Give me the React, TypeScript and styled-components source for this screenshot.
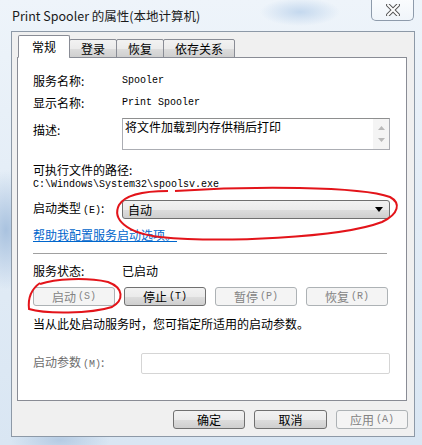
import styled, { createGlobalStyle } from 'styled-components'

const Global = createGlobalStyle`
  html, body {
    margin: 0;
    padding: 0;
    width: 422px;
    height: 445px;
    overflow: hidden;
  }
  * { box-sizing: border-box; }
`

const cjk = `"Noto Sans CJK SC", "Noto Sans", sans-serif`
const mono = `"Liberation Mono", "Noto Sans CJK SC", monospace`

const Window = styled.div`
  position: relative;
  width: 422px;
  height: 445px;
  display: flex;
  flex-direction: column;
  font-family: ${cjk};
  font-size: 12px;
  color: #000;
  background:
    radial-gradient(ellipse 30px 60px at 6px 230px, #a9c2df 0%, rgba(169,194,223,0) 100%),
    radial-gradient(ellipse 40px 14px at 300px 12px, #c4d8ee 0%, rgba(196,216,238,0) 100%),
    radial-gradient(ellipse 50px 18px at 60px 440px, #b5cbe3 0%, rgba(181,203,227,0) 100%),
    linear-gradient(180deg, #eef4fa 0%, #e2ecf6 50%, #d9e6f3 100%);
`

const TitleBar = styled.div`
  height: 31px;
  display: flex;
  justify-content: space-between;
  align-items: flex-start;
  padding: 0 8px 0 12px;
`

const Title = styled.div`
  line-height: 31px;
  font-family: "Noto Sans CJK SC", "Open Sans", sans-serif;
  font-size: 12.5px;
  color: #1a1a1a;
`

const CloseButton = styled.div`
  width: 43px;
  height: 21px;
  border: 1px solid #8e9bab;
  border-top: none;
  border-radius: 0 0 5px 5px;
  background: linear-gradient(180deg, rgba(255,255,255,0.7), rgba(240,245,250,0.9));
  display: flex;
  align-items: center;
  justify-content: center;
`

const Body = styled.div`
  flex: 1;
  margin: 0 7px 8px 11px;
  background: #f0f0f0;
  border: 1px solid #8d99a7;
  padding: 4px 7px 0 5px;
  display: flex;
  flex-direction: column;
`

const TabStrip = styled.div`
  height: 22px;
  display: flex;
  align-items: flex-end;
  padding-left: 1px;
  margin-bottom: -1px;
  position: relative;
  z-index: 1;
`

const Tab = styled.div<{ $active?: boolean }>`
  height: ${p => (p.$active ? '23px' : '19px')};
  padding: 0 ${p => (p.$active ? '13px' : '11px')};
  margin-left: ${p => (p.$active ? '0' : '-1px')};
  border: 1px solid #898c95;
  border-bottom: ${p => (p.$active ? '1px solid #fff' : '1px solid #898c95')};
  background: ${p => (p.$active ? '#fff' : 'linear-gradient(180deg, #f2f2f2 0%, #ebebeb 50%, #dddddd 51%, #cfcfcf 100%)')};
  border-radius: 2px 2px 0 0;
  line-height: ${p => (p.$active ? '22px' : '18px')};
  font-size: 12px;
`

const Panel = styled.div`
  height: 344px;
  background: #fff;
  border: 1px solid #898c95;
  padding: 13px 16px 0 15px;
  display: flex;
  flex-direction: column;
`

const Row = styled.div<{ $top?: number; $h?: number }>`
  display: flex;
  align-items: center;
  margin-top: ${p => p.$top ?? 0}px;
  height: ${p => (p.$h ? `${p.$h}px` : 'auto')};
`

const Label = styled.div<{ $disabled?: boolean; $w?: number }>`
  width: ${p => p.$w ?? 89}px;
  flex: none;
  line-height: 16px;
  color: ${p => (p.$disabled ? '#6d6d6d' : '#000')};
  white-space: nowrap;
`

const MonoValue = styled.div`
  font-family: ${mono};
  font-size: 10px;
  line-height: 14px;
`

const Text = styled.div<{ $top?: number }>`
  margin-top: ${p => p.$top ?? 0}px;
  line-height: 16px;
  white-space: nowrap;
`

const DescRow = styled.div`
  display: flex;
  align-items: flex-start;
  margin-top: 5px;
`

const DescLabel = styled(Label)`
  padding-top: 4px;
`

const DescBox = styled.div`
  flex: 1;
  height: 32px;
  border: 1px solid #abadb3;
  border-top-color: #8e8f8f;
  display: flex;
  background: #fff;
`

const DescText = styled.div`
  flex: 1;
  padding: 0 2px;
  line-height: 15px;
`

const ScrollBar = styled.div`
  width: 16px;
  background: #f4f4f4;
  display: flex;
  flex-direction: column;
  justify-content: space-around;
  align-items: center;
  padding: 3px 0;
`

const Combo = styled.div`
  flex: 1;
  height: 19px;
  border: 1px solid #707070;
  border-radius: 3px;
  background: linear-gradient(180deg, #f2f2f2 0%, #ebebeb 50%, #dddddd 51%, #cfcfcf 100%);
  display: flex;
  align-items: center;
  justify-content: space-between;
  padding: 0 6px 0 5px;
  line-height: 16px;
`

const Link = styled.div`
  margin-top: 8px;
  color: #0066cc;
  text-decoration: underline;
  line-height: 16px;
`

const Separator = styled.div`
  margin-top: 10px;
  height: 2px;
  border-top: 1px solid #a0a0a0;
  border-bottom: 1px solid #fff;
  margin-right: 3px;
`

const ButtonRow = styled.div`
  margin-top: 8px;
  display: grid;
  grid-template-columns: repeat(4, 82px);
  column-gap: 9px;
`

const Button = styled.div<{ $disabled?: boolean; $w?: number }>`
  height: 19px;
  width: ${p => (p.$w ? `${p.$w}px` : 'auto')};
  border: 1px solid ${p => (p.$disabled ? '#adb2b5' : '#707070')};
  border-radius: 3px;
  background: ${p =>
    p.$disabled
      ? '#f4f4f4'
      : 'linear-gradient(180deg, #f2f2f2 0%, #ebebeb 50%, #dddddd 51%, #cfcfcf 100%)'};
  color: ${p => (p.$disabled ? '#838383' : '#000')};
  display: flex;
  align-items: center;
  justify-content: center;
  font-size: 12px;
  line-height: 16px;
  white-space: nowrap;
`

const Key = styled.span`
  font-family: ${mono};
  font-size: 10px;
  margin-left: 2px;
`

const ParamRow = styled.div`
  margin-top: 21px;
  display: flex;
  align-items: center;
`

const ParamBox = styled.div`
  flex: 1;
  height: 21px;
  border: 1px solid #d5d5d5;
  border-radius: 2px;
  background: #fff;
`

const Footer = styled.div`
  margin-top: 9px;
  display: flex;
  justify-content: flex-end;
  gap: 9px;
  margin-right: -1px;
`

const Overlay = styled.svg`
  position: absolute;
  left: 0;
  top: 0;
  pointer-events: none;
`

function App() {
  return (
    <Window>
      <Global />
      <TitleBar>
        <Title>Print Spooler 的属性(本地计算机)</Title>
        <CloseButton>
          <svg width="14" height="12" viewBox="0 0 14 12">
            <path d="M2 1 L12 11 M12 1 L2 11" stroke="#555" strokeWidth="4" strokeLinecap="square" />
            <path d="M2 1 L12 11 M12 1 L2 11" stroke="#fff" strokeWidth="2" strokeLinecap="square" />
          </svg>
        </CloseButton>
      </TitleBar>
      <Body>
        <TabStrip>
          <Tab $active>常规</Tab>
          <Tab>登录</Tab>
          <Tab>恢复</Tab>
          <Tab>依存关系</Tab>
        </TabStrip>
        <Panel>
          <Row $h={20}>
            <Label>服务名称:</Label>
            <MonoValue>Spooler</MonoValue>
          </Row>
          <Row $top={2} $h={20}>
            <Label>显示名称:</Label>
            <MonoValue>Print Spooler</MonoValue>
          </Row>
          <DescRow>
            <DescLabel>描述:</DescLabel>
            <DescBox>
              <DescText>将文件加载到内存供稍后打印</DescText>
              <ScrollBar>
                <svg width="7" height="4" viewBox="0 0 7 4"><path d="M0 4 L3.5 0 L7 4 Z" fill="#b9b9b9" /></svg>
                <svg width="7" height="4" viewBox="0 0 7 4"><path d="M0 0 L3.5 4 L7 0 Z" fill="#b9b9b9" /></svg>
              </ScrollBar>
            </DescBox>
          </DescRow>
          <Text $top={12}>可执行文件的路径:</Text>
          <MonoValue>C:\Windows\System32\spoolsv.exe</MonoValue>
          <Row $top={8}>
            <Label>启动类型<Key>(E)</Key>:</Label>
            <Combo>
              <span>自动</span>
              <svg width="8" height="5" viewBox="0 0 8 5"><path d="M0 0 L8 0 L4 5 Z" fill="#000" /></svg>
            </Combo>
          </Row>
          <Link>帮助我配置服务启动选项。</Link>
          <Separator />
          <Row $top={7}>
            <Label>服务状态:</Label>
            <span>已启动</span>
          </Row>
          <ButtonRow>
            <Button $disabled>启动<Key>(S)</Key></Button>
            <Button>停止<Key>(T)</Key></Button>
            <Button $disabled>暂停<Key>(P)</Key></Button>
            <Button $disabled>恢复<Key>(R)</Key></Button>
          </ButtonRow>
          <Text $top={10}>当从此处启动服务时，您可指定所适用的启动参数。</Text>
          <ParamRow>
            <Label $disabled $w={108}>启动参数<Key>(M)</Key>:</Label>
            <ParamBox />
          </ParamRow>
        </Panel>
        <Footer>
          <Button $w={72}>确定</Button>
          <Button $w={73}>取消</Button>
          <Button $w={72} $disabled>应用<Key>(A)</Key></Button>
        </Footer>
      </Body>
      <Overlay width="422" height="445" viewBox="0 0 422 445">
        <path
          d="M175 191 C250 186 360 186 390 197 C401 203 399 214 382 222 C340 238 220 243 160 237 C126 233 112 219 119 205 C125 195 145 191 168 191"
          fill="none"
          stroke="#e3141a"
          strokeWidth="2"
        />
        <path
          d="M40 283 C30 290 28 300 29 309 C45 314 90 314 112 307 C124 300 124 288 108 282 C85 277 55 279 40 284"
          fill="none"
          stroke="#e3141a"
          strokeWidth="2"
        />
      </Overlay>
    </Window>
  )
}

export default App
